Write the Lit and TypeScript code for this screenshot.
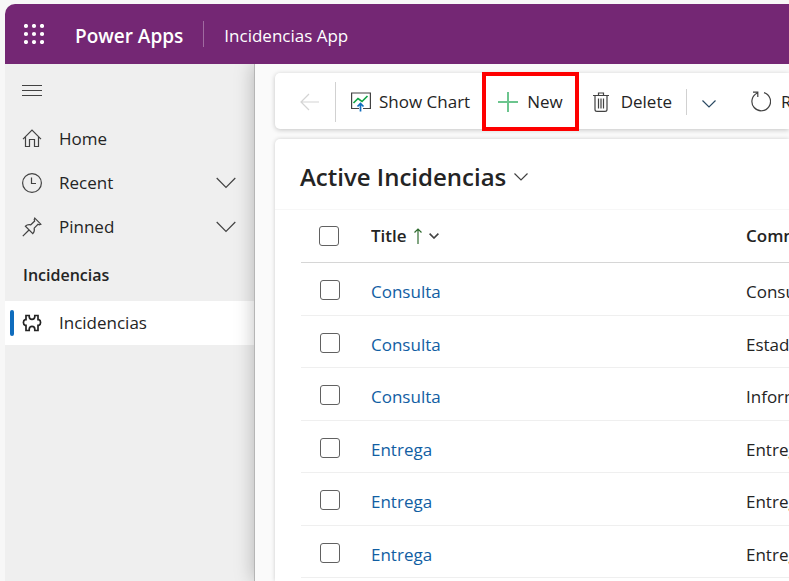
import { LitElement, html, css, svg } from "lit";
import { customElement } from "lit/decorators.js";
import { classMap } from "lit/directives/class-map.js";

const icon = (name: string, w: number, h: number, body: unknown) =>
  html`<svg class="icon ${name}" width=${w} height=${h} viewBox="0 0 ${w} ${h}" aria-hidden="true">${body}</svg>`;

const icons = {
  waffle: icon("fill", 20, 20, [2, 10, 18].map((y) => [2, 10, 18].map((x) => svg`<circle cx=${x} cy=${y} r="2.1"/>`))),
  menu: icon("", 20, 12, svg`<path d="M0 .5H20M0 5.5H20M0 10.5H20"/>`),
  home: icon("", 20, 20, svg`<path d="M1 10.2 10 1.2 19 10.2M3.5 8V17.5H7.5V10.5H12.5V17.5H16.5V8"/>`),
  clock: icon("", 20, 20, svg`<circle cx="10" cy="10" r="9.4"/><path d="M9.5 4.5V10.5H14"/>`),
  pin: icon("", 20, 20, svg`<path d="M.8 19.2 7 13M12.8 1.2 18.8 7.2 17.2 7.8 16 7.3 12.2 11.2C12.7 13.4 12.2 15.2 10.8 16.6L3.4 9.2C4.8 7.8 6.6 7.3 8.8 7.8L12.7 4 12.2 2.8Z"/>`),
  puzzle: icon("bold", 20, 18, svg`<path d="M4 1.5H7.2V2.6A2.8 2.8 0 0 0 12.8 2.6V1.5H16V5.6H16.8A2.4 3 0 0 1 16.8 11.4H16V16.5H12.8V15.2A2.8 2.8 0 0 0 7.2 15.2V16.5H4V11.4H3.2A2.4 3 0 0 1 3.2 5.6H4Z"/>`),
  chevron: icon("", 20, 12, svg`<path d="M.7 1 10 10.3 19.3 1"/>`),
  back: icon("faint", 19, 18, svg`<path d="M19 9H1M9 1 1 9 9 17"/>`),
  chart: icon("", 20, 20, svg`<path d="M8 16.5H.6V1H19.4V16.5H12"/><path class="green" d="M2.5 11 7 6.5 11 9.5 16.5 4"/><path class="blue" d="M9.5 19.5V12M6.5 14.5 9.5 11.5 12.5 14.5"/>`),
  plus: icon("plus", 20, 20, svg`<path d="M10 0V20M0 10H20"/>`),
  trash: icon("", 16, 20, svg`<path d="M0 3.5H16M5.5 3V1H10.5V3M2 3.5V17.5Q2 19.4 4 19.4H12Q14 19.4 14 17.5V3.5M5.5 6.5V16.5M8 6.5V16.5M10.5 6.5V16.5"/>`),
  smallChevron: icon("", 14, 8, svg`<path d="M.5 .5 7 7 13.5 .5"/>`),
  refresh: icon("", 20, 21, svg`<path d="M13 1.6A9.3 9.3 0 1 1 6.4 2M2 1.2H6.8V6"/>`),
  sortUp: icon("sort", 8, 16, svg`<path d="M4 16V1M.5 4.5 4 1 7.5 4.5"/>`),
  sortMenu: icon("sortmenu", 10, 6, svg`<path d="M.6 .6 5 5 9.4 .6"/>`),
};

const rows = [
  ["Consulta", "Consulta general"],
  ["Consulta", "Estado del pedido"],
  ["Consulta", "Información"],
  ["Entrega", "Entrega tardía"],
  ["Entrega", "Entrega parcial"],
  ["Entrega", "Entrega errónea"],
];

const shared = css`
  * { box-sizing: border-box; }
  button { font: inherit; color: inherit; background: none; border: 0; padding: 0; margin: 0; text-align: left; cursor: pointer; }
  a { text-decoration: none; color: inherit; }
  .icon { display: block; flex: none; fill: none; stroke: #424242; stroke-width: 1.2; }
  .fill { fill: #fff; stroke: none; }
  .faint { stroke: #d4d4d4; }
  .bold { stroke: #242424; stroke-width: 1.7; }
`;

@customElement("app-sidebar")
class AppSidebar extends LitElement {
  static styles = [shared, css`
    :host { display: block; width: 249px; flex: none; background: #efefef; color: #242424; }
    .menu { display: flex; height: 53px; padding-left: 17px; align-items: center; }
    nav { display: flex; flex-direction: column; }
    .item { display: flex; align-items: center; width: 100%; height: 44px; padding: 0 18px 0 17px; gap: 17px; }
    .item .label { flex: 1; }
    .group { margin: 0; height: 52px; line-height: 52px; padding-left: 18px; font-size: 16px; font-weight: 600; }
    .selected { background: #fff; padding-left: 5px; gap: 8px; }
    .marker { width: 4px; height: 26px; border-radius: 2px; background: #0f6cbd; }
    .selected .label { margin-left: 9px; }
  `];
  private entry(glyph: unknown, text: string, opens = false) {
    return html`<button class="item">${glyph}<span class="label">${text}</span>${opens ? icons.chevron : ""}</button>`;
  }
  render() {
    return html`
      <button class="menu" aria-label="Site map">${icons.menu}</button>
      <nav>
        ${this.entry(icons.home, "Home")}
        ${this.entry(icons.clock, "Recent", true)}
        ${this.entry(icons.pin, "Pinned", true)}
        <h2 class="group">Incidencias</h2>
        <a class=${classMap({ item: true, selected: true })} href="#incidencias" aria-current="page">
          <span class="marker"></span>${icons.puzzle}<span class="label">Incidencias</span>
        </a>
      </nav>`;
  }
}

@customElement("command-bar")
class CommandBar extends LitElement {
  static styles = [shared, css`
    :host { display: flex; align-items: center; height: 56px; flex: none; padding: 1px 0 0 8px; background: #fff;
      border-radius: 5px 0 0 5px; box-shadow: 0 1px 5px rgba(0, 0, 0, .22); white-space: nowrap; color: #242424; }
    button { display: flex; align-items: center; flex: none; height: 51px; gap: 8px; }
    .back { width: 52px; justify-content: center; }
    .rule { width: 1px; height: 40px; flex: none; background: #d1d1d1; }
    .rule.short { height: 26px; }
    .chart { padding: 0 16px 0 15px; }
    .new { padding: 0 12px; margin-right: 18px; gap: 9px; outline: 4px solid #fe0000; }
    .delete { padding-right: 14px; gap: 12px; }
    .more { padding: 4px 35px 0 15px; }
    .more .icon { stroke: #2b4a63; }
    .green { stroke: #10a345; stroke-width: 1.6; }
    .blue { stroke: #0f6cbd; stroke-width: 1.7; }
    .plus { stroke: #6cc58e; stroke-width: 2; }
    .refresh { gap: 10px; }
  `];
  render() {
    return html`
      <button class="back" aria-label="Back">${icons.back}</button>
      <span class="rule"></span>
      <button class="chart">${icons.chart}Show Chart</button>
      <button class="new">${icons.plus}New</button>
      <button class="delete">${icons.trash}Delete</button>
      <span class="rule short"></span>
      <button class="more" aria-label="More commands">${icons.smallChevron}</button>
      <button class="refresh">${icons.refresh}Refresh</button>`;
  }
}

@customElement("record-grid")
class RecordGrid extends LitElement {
  static styles = [shared, css`
    :host { display: block; flex: 1; min-height: 0; overflow: hidden; background: #fff; color: #242424; white-space: nowrap; }
    .view { display: flex; align-items: center; height: 71px; padding: 6px 0 0 25px; border-bottom: 1px solid #f7f7f7; }
    h1 { margin: 0; font-size: 24px; line-height: 32px; font-weight: 600; }
    .view button { display: flex; align-items: center; gap: 8px; }
    .wrap { padding-left: 26px; }
    table { width: 100%; border-collapse: separate; border-spacing: 0; table-layout: fixed; }
    th, td { padding: 0; text-align: left; overflow: hidden; }
    th { height: 53px; font-weight: 600; font-size: 17px; border-bottom: 1px solid #d6d6d6; }
    td { height: 53px; padding-top: 6px; border-bottom: 1px solid #efefef; }
    tr:nth-child(even) td { height: 52px; }
    .check { width: 70px; padding-left: 18px; }
    td.check { padding: 2px 0 0 19px; }
    .title { width: 375px; }
    .sorted { display: flex; align-items: center; gap: 7px; }
    td a { color: #115ea3; }
    input { appearance: none; display: block; width: 20px; height: 20px; margin: 0; border: 1px solid #616161; border-radius: 3px; background: #fff; }
    .sort { stroke: #2f6b2f; }
    .sortmenu { stroke-width: 1.6; }
  `];
  render() {
    return html`
      <div class="view"><button><h1>Active Incidencias</h1>${icons.smallChevron}</button></div>
      <div class="wrap">
        <table>
          <thead>
            <tr>
              <th class="check"><input type="checkbox" aria-label="Select all rows"></th>
              <th class="title"><button class="sorted">Title ${icons.sortUp}${icons.sortMenu}</button></th>
              <th>Comments</th>
            </tr>
          </thead>
          <tbody>
            ${rows.map(([title, comment]) => html`
              <tr>
                <td class="check"><input type="checkbox" aria-label="Select ${title}"></td>
                <td><a href="#record">${title}</a></td>
                <td>${comment}</td>
              </tr>`)}
          </tbody>
        </table>
      </div>`;
  }
}

@customElement("app-root")
class AppRoot extends LitElement {
  static styles = [shared, css`
    :host { display: flex; flex-direction: column; height: 100vh; padding: 4px 0 0 5px; box-sizing: border-box; overflow: hidden;
      background: #f7f7f7; font: 17px/24px "Open Sans", "Noto Sans", sans-serif; }
    header { display: flex; align-items: center; flex: none; height: 60px; padding-left: 19px; background: #742774; color: #fff;
      border-radius: 10px 0 0 0; white-space: nowrap; }
    .brand { margin-left: 31px; padding-top: 3px; font-size: 19px; font-weight: 600; }
    .divider { width: 1px; height: 26px; margin: 0 20px; background: #a06aa0; }
    .app { padding-top: 3px; }
    .body { display: flex; flex: 1; min-height: 0; }
    main { display: flex; flex-direction: column; flex: 1; min-width: 0; gap: 10px; padding: 9px 0 0 20px; overflow: hidden;
      background: #fafafa; border-left: 1px solid #b5b5b5; box-shadow: 0 0 18px rgba(0, 0, 0, .25); clip-path: inset(0 0 0 -24px); }
    record-grid { border-radius: 5px 0 0 0; box-shadow: 0 0 4px rgba(0, 0, 0, .18); }
  `];
  render() {
    return html`
      <header>
        <button aria-label="App launcher">${icons.waffle}</button>
        <a class="brand" href="#home">Power Apps</a>
        <span class="divider"></span>
        <a class="app" href="#app">Incidencias App</a>
      </header>
      <div class="body">
        <app-sidebar></app-sidebar>
        <main><command-bar></command-bar><record-grid></record-grid></main>
      </div>`;
  }
}
